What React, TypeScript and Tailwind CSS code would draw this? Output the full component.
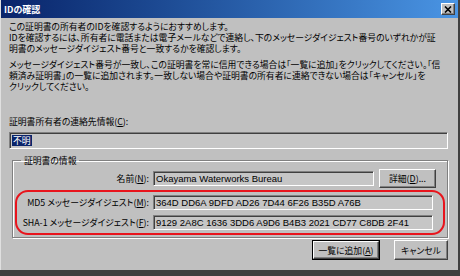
import React from "react";

const font = "font-['Noto_Sans_CJK_JP','Noto_Sans_CJK_SC',sans-serif] [font-feature-settings:'palt']";
const latin = "font-['Liberation_Sans','Noto_Sans_CJK_JP',sans-serif]";

// win2000 style borders
const raised =
    "border border-t-white border-l-white border-r-[#404040] border-b-[#404040] shadow-[inset_-1px_-1px_0_#808080]";
const sunken =
    "border border-t-[#808080] border-l-[#808080] border-r-white border-b-white shadow-[inset_1px_1px_0_#404040]";

const Key = ({ k }: { k: string }) => (
    <>
        (<span className="underline">{k}</span>)
    </>
);

const Field = ({ value, className = "" }: { value: string; className?: string }) => (
    <div className={`${sunken} bg-[#c6c6c6] h-[15px] flex items-center pl-[2px] ${latin} text-[9.5px] text-black whitespace-nowrap overflow-hidden ${className}`}>
        {value}
    </div>
);

export default function App() {
    return (
        <div className={`w-[460px] h-[276px] bg-[#404040] overflow-hidden ${font}`}>
            <div className="w-[459px] h-[270px] bg-[#c0c0c0] border-l border-l-[#e0e0e0] border-r border-r-[#404040] flex flex-col">
                <div className="flex justify-between items-center bg-linear-to-r from-[#0a246a] to-[#4a95e4] pr-[3px] pl-[3px] h-[18px]">
                    <span className="font-bold text-[9px] text-white leading-none">IDの確認</span>
                    <div className={`${raised} bg-[#c0c0c0] w-[14px] h-[12px] flex items-center justify-center`}>
                        <svg width="8" height="7" viewBox="0 0 8 7">
                            <path d="M1 0.5 L7 6.5 M7 0.5 L1 6.5" stroke="black" strokeWidth="1.6" />
                        </svg>
                    </div>
                </div>

                <div className="flex flex-col px-[8px] pt-[3px] text-[8.8px] text-black leading-[11px] whitespace-nowrap">
                    <div>
                        <div>この証明書の所有者のIDを確認するようにおすすめします。</div>
                        <div>IDを確認するには、所有者に電話または電子メールなどで連絡し、下のメッセージダイジェスト番号のいずれかが証</div>
                        <div>明書のメッセージダイジェスト番号と一致するかを確認します。</div>
                    </div>
                    <div className="mt-[5px]">
                        <div>メッセージダイジェスト番号が一致し、この証明書を常に信用できる場合は「一覧に追加」をクリックしてください。「信</div>
                        <div>頼済み証明書」の一覧に追加されます。一致しない場合や証明書の所有者に連絡できない場合は「キャンセル」を</div>
                        <div>クリックしてください。</div>
                    </div>

                    <div className="mt-[24px]">
                        証明書所有者の連絡先情報<Key k="C" />:
                    </div>
                    <div className={`${sunken} bg-[#c6c6c6] mt-[5px] h-[17px] flex items-center pl-[2px] w-[439px]`}>
                        <span className="bg-[#0a246a] px-[1px] text-white leading-[11px]">不明</span>
                    </div>

                    <fieldset className="mt-[6px] ml-[3px] border border-[#808080] shadow-[inset_1px_1px_0_white,1px_1px_0_white] w-[436px] pb-[2px]">
                        <legend className="ml-[8px] px-[3px]">証明書の情報</legend>
                        <div className="grid grid-cols-[140px_1fr] items-center mt-[3px]">
                            <div className="pr-[4px] text-right">
                                名前<Key k="N" />:
                            </div>
                            <div className="flex items-center gap-[5px]">
                                <Field value="Okayama Waterworks Bureau" className="w-[221px]" />
                                <div className={`${raised} bg-[#c0c0c0] w-[57px] h-[19px] flex items-center justify-center`}>
                                    詳細<Key k="D" />...
                                </div>
                            </div>
                        </div>
                        <div className="flex flex-col gap-[5px] mt-[2px] mx-[2px] border-2 border-[#e8141c] rounded-[13px] py-[3px]">
                            <div className="grid grid-cols-[136px_1fr] items-center">
                                <div className="pr-[4px] text-right">
                                    MD5 メッセージダイジェスト<Key k="M" />:
                                </div>
                                <Field value="364D DD6A 9DFD AD26 7D44 6F26 B35D A76B" className="w-[280px]" />
                            </div>
                            <div className="grid grid-cols-[136px_1fr] items-center">
                                <div className="pr-[4px] text-right">
                                    SHA-1 メッセージダイジェスト<Key k="F" />:
                                </div>
                                <Field value="9129 2A8C 1636 3DD6 A9D6 B4B3 2021 CD77 C8DB 2F41" className="w-[280px]" />
                            </div>
                        </div>
                    </fieldset>

                    <div className="flex justify-end gap-[14px] mt-[2px] pr-[2px]">
                        <div className="border border-black">
                            <div className={`${raised} bg-[#c0c0c0] w-[66px] h-[18px] flex items-center justify-center`}>
                                一覧に追加<Key k="A" />
                            </div>
                        </div>
                        <div className={`${raised} bg-[#c0c0c0] w-[54px] h-[20px] flex items-center justify-center`}>
                            キャンセル
                        </div>
                    </div>
                </div>
            </div>
        </div>
    );
}
